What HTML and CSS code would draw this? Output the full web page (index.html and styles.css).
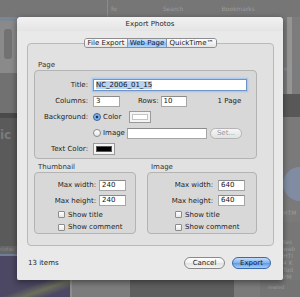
FILE: index.html
```html
<!DOCTYPE html>
<html lang="en">
<head>
    <meta charset="UTF-8">
    <title>Export Photos</title>
    <link rel="stylesheet" href="styles.css">
</head>
<body>
    <div class="desktop">
        <!-- dimmed iPhoto window behind the sheet -->
        <div class="topbar">
            <span class="bg-divider"></span>
            <span class="bg-text fo">fo</span>
            <span class="bg-text search">Search</span>
            <span class="bg-text bookmarks">Bookmarks</span>
        </div>
        <div class="side-left">
            <div class="sl-a"></div>
            <div class="sl-b"><div class="slider"></div></div>
            <div class="sl-c"></div>
            <div class="sl-d"></div>
            <div class="sl-e">ic</div>
            <div class="sl-f">rldfac</div>
            <div class="sl-g"></div>
        </div>
        <div class="middle"></div>
        <div class="side-right">
            <div class="sr-a"><span>re</span></div>
            <div class="sr-b"></div>
            <div class="sr-c"></div>
            <div class="sr-d"><div class="globe"></div><span>HTM</span></div>
            <div class="sr-e">
                <span>tes</span><span>web</span><span>HTI</span><span>4 K</span><span>Tod</span><span>PM</span>
            </div>
        </div>
        <div class="bottombar">
            <div class="bb-map"></div>
            <div class="bb-a"></div>
            <div class="bb-b"></div>
            <div class="bb-c"></div>
            <div class="bb-d">reated</div>
        </div>

        <!-- the export sheet -->
        <div class="sheet">
            <div class="titlebar">Export Photos</div>
            <div class="tabs">
                <span class="tab tab-file">File Export</span>
                <span class="tab tab-web active">Web Page</span>
                <span class="tab tab-qt">QuickTime™</span>
            </div>
            <div class="panel">
                <div class="group-label page-label">Page</div>
                <div class="box page-box">
                    <span class="lbl">Title:</span>
                    <div class="ctl">
                        <div class="field title-field"><span class="sel">NC_2006_01_15</span></div>
                    </div>

                    <span class="lbl">Columns:</span>
                    <div class="ctl">
                        <div class="field num">3</div>
                        <span class="rows-lbl">Rows:</span>
                        <div class="field num rows-field">10</div>
                        <span class="pages">1 Page</span>
                    </div>

                    <span class="lbl">Background:</span>
                    <div class="ctl">
                        <span class="radio on"></span>
                        <span class="opt">Color</span>
                        <span class="well"><span class="well-in"></span></span>
                    </div>

                    <span class="lbl"></span>
                    <div class="ctl">
                        <span class="radio"></span>
                        <span class="opt">Image</span>
                        <div class="field img-field"></div>
                        <span class="set-btn">Set...</span>
                    </div>

                    <span class="lbl">Text Color:</span>
                    <div class="ctl">
                        <span class="well"><span class="well-in black"></span></span>
                    </div>
                </div>

                <div class="pair">
                    <div class="col thumb-col">
                        <div class="group-label">Thumbnail</div>
                        <div class="box size-box">
                            <span class="lbl">Max width:</span>
                            <div class="field num">240</div>
                            <span class="lbl">Max height:</span>
                            <div class="field num">240</div>
                            <div class="check-row"><span class="check"></span>Show title</div>
                            <div class="check-row"><span class="check"></span>Show comment</div>
                        </div>
                    </div>
                    <div class="col image-col">
                        <div class="group-label">Image</div>
                        <div class="box size-box wide">
                            <span class="lbl">Max width:</span>
                            <div class="field num">640</div>
                            <span class="lbl">Max height:</span>
                            <div class="field num">640</div>
                            <div class="check-row"><span class="check"></span>Show title</div>
                            <div class="check-row"><span class="check"></span>Show comment</div>
                        </div>
                    </div>
                </div>
            </div>
            <div class="footer">
                <span class="count">13 items</span>
                <div class="buttons">
                    <span class="btn cancel">Cancel</span>
                    <span class="btn export">Export</span>
                </div>
            </div>
        </div>
    </div>
</body>
</html>
```

FILE: styles.css
```css
body {
    margin: 0;
    padding: 0;
    font-family: "DejaVu Sans", sans-serif;
    font-size: 7px;
    color: #1e1e1e;
}

.desktop {
    position: relative;
    width: 300px;
    height: 297px;
    overflow: hidden;
    background-color: #777;
    display: grid;
    grid-template-columns: 17px 266px 17px;
    grid-template-rows: 17px 263px 17px;
}

/* ---------- backdrop ---------- */

.topbar {
    grid-column: 1 / 4;
    display: flex;
    align-items: center;
    background-color: #767676;
    color: #9c9c9c;
    font-size: 6px;
}

.bg-divider {
    width: 1px;
    height: 17px;
    margin-left: 107px;
    background-color: #8a8a8a;
}

.bg-text.fo { margin-left: 3px; }
.bg-text.search { margin-left: 46px; }
.bg-text.bookmarks { margin-left: 38px; }

.side-left {
    display: flex;
    flex-direction: column;
}

.sl-a { height: 4px; background-color: #7b8594; }
.sl-b { height: 52px; background-color: #8a8a8a; padding: 8px 0 0 4px; box-sizing: border-box; }
.slider { width: 8px; height: 30px; background-color: #727272; border-radius: 3px; }
.sl-c { height: 40px; background-color: #717171; }
.sl-d { height: 5px; background-color: #4a4a4a; }
.sl-e {
    height: 128px;
    background-color: #5a5a5a;
    color: #7c7c7c;
    font-size: 12px;
    font-weight: bold;
    padding-top: 10px;
    box-sizing: border-box;
}
.sl-f { height: 8px; background-color: #666; color: #8a8a8a; font-size: 5px; }
.sl-g { flex: 1; background-color: #4c4762; border-top: 2px solid #6f7e96; }

.middle { background-color: #777; }

.side-right {
    display: flex;
    flex-direction: column;
    color: #9a9a9a;
    font-size: 6px;
}

.sr-a {
    height: 78px;
    background: linear-gradient(to right, #7a7a7a 4px, #959595 4px, #959595 9px, #7c7c7c 9px);
    padding-top: 48px;
    box-sizing: border-box;
}
.sr-a span { margin-left: 1px; }
.sr-b { height: 25px; background-color: #585858; }
.sr-c { height: 48px; background-color: #7a7a7a; }
.sr-d {
    height: 62px;
    background-color: #7a7a7a;
    display: flex;
    flex-direction: column;
    padding-top: 4px;
    box-sizing: border-box;
}
.globe {
    width: 34px;
    height: 34px;
    border-radius: 50%;
    background-color: #7f8ca2;
    margin-bottom: 8px;
}
.sr-e {
    flex: 1;
    background-color: #777;
    display: flex;
    flex-direction: column;
    padding-top: 16px;
    line-height: 7px;
}

.bottombar {
    grid-column: 1 / 4;
    display: flex;
}

.bb-map { width: 70px; background: linear-gradient(160deg, #4c4762 40%, #6b6f5c 60%, #4c4762 80%); }
.bb-a { width: 58px; background-color: #7c7c7c; border-left: 2px solid #8e8e8e; }
.bb-b { width: 104px; background-color: #5e5e5e; }
.bb-c { width: 26px; background-color: #7a7a7a; }
.bb-d { flex: 1; background-color: #747474; color: #9a9a9a; font-size: 5px; padding: 4px 0 0 8px; }

/* ---------- sheet ---------- */

.sheet {
    position: absolute;
    left: 17px;
    top: 17px;
    width: 266px;
    height: 263px;
    background-color: #e9e9e9;
    border-radius: 4px 4px 2px 2px;
    box-shadow: 0 2px 6px rgba(0, 0, 0, 0.45);
    display: flex;
    flex-direction: column;
}

.titlebar {
    height: 14px;
    line-height: 14px;
    text-align: center;
    color: #262626;
    background: linear-gradient(#f2f2f2, #e4e4e4);
    border-radius: 4px 4px 0 0;
}

.tabs {
    position: relative;
    z-index: 1;
    align-self: center;
    display: flex;
    height: 10px;
    margin-top: 7px;
    border: 1px solid #8e8e8e;
    border-radius: 3px;
    box-sizing: border-box;
    overflow: hidden;
    margin-left: 1px;
}

.tab {
    line-height: 8px;
    text-align: center;
    background: linear-gradient(#ffffff, #e4e4e4);
    color: #222;
}

.tab-file { width: 42px; border-right: 1px solid #9a9a9a; }
.tab-web { width: 38px; border-right: 1px solid #7c95b8; }
.tab-qt { width: 49px; }

.tab.active {
    background: linear-gradient(#d4e7fc, #9cc6f3 50%, #87b8ef 51%, #b4d6fa);
    color: #10244a;
}

.panel {
    margin: -5px 0 0 10px;
    width: 247px;
    height: 203px;
    box-sizing: border-box;
    border: 1px solid #b9b9b9;
    border-radius: 4px;
    background-color: #e1e1e1;
}

.group-label {
    height: 10px;
    line-height: 10px;
    margin-left: 4px;
    color: #333;
}

.page-label {
    margin: 16px 0 0 10px;
}

.box {
    box-sizing: border-box;
    border: 1px solid #b3b3b3;
    border-radius: 4px;
    background-color: #d8d8d8;
}

.page-box {
    margin-left: 6px;
    width: 223px;
    height: 89px;
    padding-top: 6px;
    display: grid;
    grid-template-columns: 53px 1fr;
    grid-auto-rows: 16px;
    column-gap: 5px;
    align-items: center;
}

.lbl {
    text-align: right;
    white-space: nowrap;
}

.ctl {
    display: flex;
    align-items: center;
}

.field {
    box-sizing: border-box;
    height: 11px;
    line-height: 9px;
    padding-left: 2px;
    background-color: #fff;
    border: 1px solid #a6a6a6;
    border-top-color: #8a8a8a;
    color: #111;
}

.num {
    width: 27px;
}

.title-field {
    width: 154px;
    height: 12px;
    border-color: #6f94c6;
    box-shadow: 0 0 0 1px #a9c9ef, 0 0 2px 1px #a9c9ef;
    line-height: 10px;
}

.sel {
    background-color: #b7d2f2;
}

.rows-lbl {
    margin-left: 18px;
    margin-right: 2px;
}

.rows-field {
    width: 26px;
}

.pages {
    margin-left: 31px;
    color: #222;
}

.radio {
    box-sizing: border-box;
    width: 8px;
    height: 8px;
    border-radius: 50%;
    border: 1px solid #8a8a8a;
    background: linear-gradient(#fff, #e6e6e6);
    margin-right: 2px;
}

.radio.on {
    border-color: #38609a;
    background: radial-gradient(circle, #1c2f52 0, #1c2f52 1.3px, #6fa6ea 1.6px, #9ec8f6 100%);
}

.opt {
    width: 26px;
}

.well {
    box-sizing: border-box;
    display: flex;
    width: 22px;
    height: 12px;
    padding: 2px;
    border: 1px solid #9a9a9a;
    background-color: #f4f4f4;
}

.well-in {
    flex: 1;
    background-color: #fff;
    border: 1px solid #c4c4c4;
}

.well-in.black {
    background-color: #000;
    border-color: #555;
}

.img-field {
    width: 80px;
    margin-left: -2px;
}

.set-btn {
    box-sizing: border-box;
    width: 32px;
    height: 11px;
    line-height: 9px;
    margin-left: 3px;
    text-align: center;
    border: 1px solid #b4b4b4;
    border-radius: 6px;
    background: linear-gradient(#f6f6f6, #e2e2e2);
    color: #9a9a9a;
}

.pair {
    display: flex;
    margin: 3px 0 0 6px;
}

.thumb-col {
    width: 102px;
}

.image-col {
    width: 110px;
    margin-left: 11px;
}

.size-box {
    height: 62px;
    padding-top: 4px;
    display: grid;
    grid-template-columns: 61px 27px;
    grid-template-rows: 16px 15px 13px 12px;
    column-gap: 3px;
    align-items: center;
}

.size-box.wide {
    grid-template-columns: 65px 27px;
    column-gap: 5px;
}

.check-row {
    grid-column: 1 / 3;
    display: flex;
    align-items: center;
    padding-left: 23px;
}

.size-box.wide .check-row {
    padding-left: 27px;
}

.check {
    box-sizing: border-box;
    width: 7px;
    height: 7px;
    margin-right: 3px;
    border: 1px solid #8c8c8c;
    border-radius: 1px;
    background: linear-gradient(#fff, #e8e8e8);
}

.footer {
    flex: 1;
    display: flex;
    align-items: center;
    justify-content: space-between;
    padding: 0 12px 0 11px;
}

.buttons {
    display: flex;
    gap: 7px;
}

.btn {
    box-sizing: border-box;
    height: 12px;
    line-height: 10px;
    text-align: center;
    border-radius: 6px;
}

.cancel {
    width: 41px;
    border: 1px solid #8a8a8a;
    background: linear-gradient(#ffffff, #f0f0f0 50%, #e0e0e0 51%, #f4f4f4);
    color: #222;
}

.export {
    width: 39px;
    border: 1px solid #3d69aa;
    background: linear-gradient(#c4ddfa, #7fb1ee 50%, #5d98e6 51%, #a8d0f8);
    color: #0e1f3c;
}
```
